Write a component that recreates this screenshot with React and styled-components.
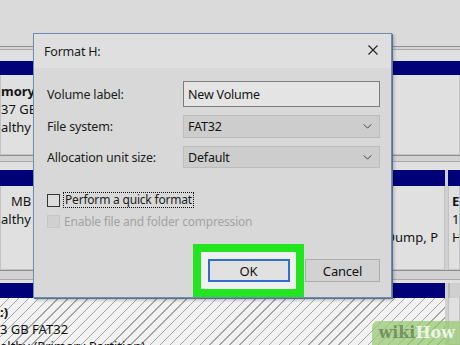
import styled, { createGlobalStyle } from 'styled-components';

const GlobalStyle = createGlobalStyle`
  html, body {
    margin: 0;
    padding: 0;
    background: #dcdcdc;
  }
  #root {
    width: 460px;
    height: 345px;
  }
`;

export default function App() {
  return (
    <>
      <GlobalStyle />
      <Screen>
        <Background>
          <TopStrip />
          <FrameLine />
          <Spacer $h="11px" />
          <DiskRow $height="94px">
            <Panel $width="250px">
              <NavyBar />
              <PanelBody $pad="7px">
                <Line $bold>mory</Line>
                <Line>37 GB</Line>
                <Line>althy (</Line>
              </PanelBody>
            </Panel>
            <Panel>
              <NavyBar />
              <PanelBody />
            </Panel>
          </DiskRow>
          <FrameLine $h="5px" />
          <Spacer $h="8px" />
          <DiskRow $height="100px">
            <Panel $width="200px">
              <NavyBar $h="16px" />
              <PanelBody $pad="6px">
                <Line $indent="10px">MB</Line>
                <Line>althy (</Line>
              </PanelBody>
            </Panel>
            <Panel $width="242px">
              <NavyBar $h="16px" />
              <PanelBody $pad="6px" $right>
                <Line>&nbsp;</Line>
                <Line>&nbsp;</Line>
                <Line>Dump, P</Line>
              </PanelBody>
            </Panel>
            <Panel>
              <NavyBar $h="16px" />
              <PanelBody $pad="6px" $indent="3px">
                <Line $bold>E</Line>
                <Line>1</Line>
                <Line>H</Line>
              </PanelBody>
            </Panel>
          </DiskRow>
          <FrameLine $h="8px" />
          <Spacer $h="3px" />
          <DiskRow $height="62px">
            <Panel $width="445px">
              <NavyBar $h="15px" />
              <Hatched>
                <HatchLine $bold>:)</HatchLine>
                <HatchLine>3 GB FAT32</HatchLine>
                <HatchLine>althy (Primary Partition)</HatchLine>
              </Hatched>
            </Panel>
            <Panel>
              <GreyBar />
              <PanelBody />
            </Panel>
          </DiskRow>
        </Background>

        <Dialog>
          <TitleBar>
            <Title>Format H:</Title>
            <CloseIcon viewBox="0 0 10 10">
              <path d="M0.5 0.5 L9.5 9.5 M9.5 0.5 L0.5 9.5" />
            </CloseIcon>
          </TitleBar>
          <DialogBody>
            <Fields>
              <Label>Volume label:</Label>
              <TextBox>New Volume</TextBox>
              <Label>File system:</Label>
              <Select>
                FAT32
                <Chevron />
              </Select>
              <Label>Allocation unit size:</Label>
              <Select>
                Default
                <Chevron />
              </Select>
            </Fields>
            <Options>
              <Option>
                <CheckBox />
                <Focused>Perform a quick format</Focused>
              </Option>
              <Option $disabled>
                <CheckBox $disabled />
                <span>Enable file and folder compression</span>
              </Option>
            </Options>
            <Buttons>
              <Highlight>
                <Button $primary>OK</Button>
              </Highlight>
              <Button>Cancel</Button>
            </Buttons>
          </DialogBody>
        </Dialog>

        <Watermark>
          <Wiki>wiki</Wiki>
          <How>How</How>
        </Watermark>
      </Screen>
    </>
  );
}

function Chevron() {
  return (
    <ChevronIcon viewBox="0 0 10 6">
      <path d="M0.5 0.5 L5 5 L9.5 0.5" />
    </ChevronIcon>
  );
}

const Screen = styled.div`
  position: relative;
  width: 460px;
  height: 345px;
  overflow: hidden;
  font-family: 'Noto Sans', 'Open Sans', sans-serif;
  color: #141414;
`;

const Background = styled.div`
  display: flex;
  flex-direction: column;
  height: 100%;
  background: #dedede;
`;

const TopStrip = styled.div`
  height: 46px;
  flex: none;
  background: #dadada;
`;

const FrameLine = styled.div`
  flex: none;
  height: ${(p) => p.$h || '2px'};
  border-top: 1px solid #8f8f8f;
  border-bottom: 1px solid #a9a9a9;
  background: #d2d2d2;
`;

const Spacer = styled.div`
  flex: none;
  height: ${(p) => p.$h};
  background: #e0e0e0;
`;

const DiskRow = styled.div`
  display: flex;
  flex: none;
  gap: 3px;
  height: ${(p) => p.$height};
  background: #d0d0d0;
`;

const Panel = styled.div`
  display: flex;
  flex-direction: column;
  width: ${(p) => p.$width || 'auto'};
  flex: ${(p) => (p.$width ? 'none' : '1')};
  min-width: 0;
`;

const NavyBar = styled.div`
  flex: none;
  height: ${(p) => p.$h || '14px'};
  background: #000078;
`;

const GreyBar = styled.div`
  flex: none;
  height: 15px;
  background: #cfcfcf;
  border-left: 2px solid #b5b5b5;
`;

const PanelBody = styled.div`
  flex: 1;
  padding-top: ${(p) => p.$pad || '6px'};
  padding-left: ${(p) => p.$indent || '0'};
  padding-right: 6px;
  background: #e0e0e0;
  border: 1px solid #c2c2c2;
  border-top: none;
  text-align: ${(p) => (p.$right ? 'right' : 'left')};
  font-size: 13px;
  overflow: hidden;
`;

const Hatched = styled.div`
  flex: 1;
  padding-top: 6px;
  font-size: 13px;
  background: repeating-linear-gradient(
    135deg,
    #f2f2f2 0px,
    #f2f2f2 6px,
    #a4a4a4 6px,
    #a4a4a4 7px
  );
`;

const Line = styled.div`
  height: 18px;
  line-height: 18px;
  white-space: nowrap;
  font-weight: ${(p) => (p.$bold ? 700 : 400)};
  padding-left: ${(p) => p.$indent || '0'};
`;

const HatchLine = styled(Line)`
  height: 17px;
  line-height: 17px;
`;

const Dialog = styled.div`
  position: absolute;
  left: 33px;
  top: 33px;
  width: 357px;
  height: 263px;
  display: flex;
  flex-direction: column;
  background: #d8d8d8;
  border: 1px solid #6f8db5;
  box-shadow: 1px 1px 0 #5c6f86, 2px 2px 3px rgba(0, 0, 0, 0.25);
  font-size: 12px;
  letter-spacing: -0.2px;
`;

const TitleBar = styled.div`
  display: flex;
  align-items: center;
  justify-content: space-between;
  height: 34px;
  padding: 0 13px 0 10px;
  background: #dfdfdf;
`;

const Title = styled.span`
  font-size: 12.5px;
  color: #1a1a1a;
`;

const CloseIcon = styled.svg`
  width: 10px;
  height: 10px;
  margin-bottom: 2px;
  fill: none;
  stroke: #222;
  stroke-width: 1.1;
`;

const DialogBody = styled.div`
  flex: 1;
  display: flex;
  flex-direction: column;
  padding: 13px 11px 0 13px;
`;

const Fields = styled.div`
  display: grid;
  grid-template-columns: 136px 197px;
  grid-template-rows: 26px 23px 22px;
  row-gap: 8px;
  align-items: center;
`;

const Label = styled.span`
  font-size: 12.5px;
  color: #1c1c1c;
`;

const TextBox = styled.div`
  height: 100%;
  box-sizing: border-box;
  display: flex;
  align-items: center;
  padding-left: 4px;
  font-size: 12.5px;
  background: #e4e4e4;
  border: 1px solid #7c7c7c;
`;

const Select = styled.div`
  height: 100%;
  box-sizing: border-box;
  display: flex;
  align-items: center;
  justify-content: space-between;
  padding: 0 7px 0 4px;
  font-size: 12.5px;
  background: #cdcdcd;
  border: 1px solid #bcbcbc;
`;

const ChevronIcon = styled.svg`
  width: 9px;
  height: 5px;
  fill: none;
  stroke: #444;
  stroke-width: 1.2;
`;

const Options = styled.div`
  display: flex;
  flex-direction: column;
  gap: 5px;
  margin-top: 24px;
`;

const Option = styled.div`
  display: flex;
  align-items: center;
  gap: 4px;
  height: 16px;
  color: ${(p) => (p.$disabled ? '#a3a3a3' : '#1c1c1c')};
`;

const CheckBox = styled.span`
  width: 13px;
  height: 13px;
  box-sizing: border-box;
  background: ${(p) => (p.$disabled ? '#d0d0d0' : '#dedede')};
  border: 1px solid ${(p) => (p.$disabled ? '#c6c6c6' : '#333')};
`;

const Focused = styled.span`
  padding: 0 1px;
  line-height: 14px;
  outline: 1px dotted #111;
  outline-offset: 0;
`;

const Buttons = styled.div`
  display: flex;
  justify-content: flex-end;
  align-items: center;
  gap: 1px;
  margin-top: 15px;
`;

const Highlight = styled.div`
  display: flex;
  align-items: center;
  justify-content: center;
  width: 111px;
  height: 53px;
  box-sizing: border-box;
  border: 8px solid #22e51f;
  background: #f0f0f0;
`;

const Button = styled.div`
  display: flex;
  align-items: center;
  justify-content: center;
  width: ${(p) => (p.$primary ? '82px' : '75px')};
  height: 23px;
  box-sizing: border-box;
  font-size: 13px;
  background: ${(p) => (p.$primary ? '#e1e1e1' : '#d2d2d2')};
  border: ${(p) => (p.$primary ? '2px solid #2f6fc9' : '1px solid #adadad')};
  color: #111;
`;

const Watermark = styled.div`
  position: absolute;
  right: 0;
  bottom: 0;
  display: flex;
  align-items: center;
  padding: 1px 5px 3px 6px;
  height: 20px;
  border-top-left-radius: 6px;
  background: rgba(150, 200, 110, 0.72);
  font-family: 'DejaVu Serif', 'Liberation Serif', serif;
  font-weight: 700;
  font-size: 16px;
`;

const Wiki = styled.span`
  color: rgba(70, 90, 60, 0.55);
`;

const How = styled.span`
  color: rgba(255, 255, 255, 0.78);
`;
